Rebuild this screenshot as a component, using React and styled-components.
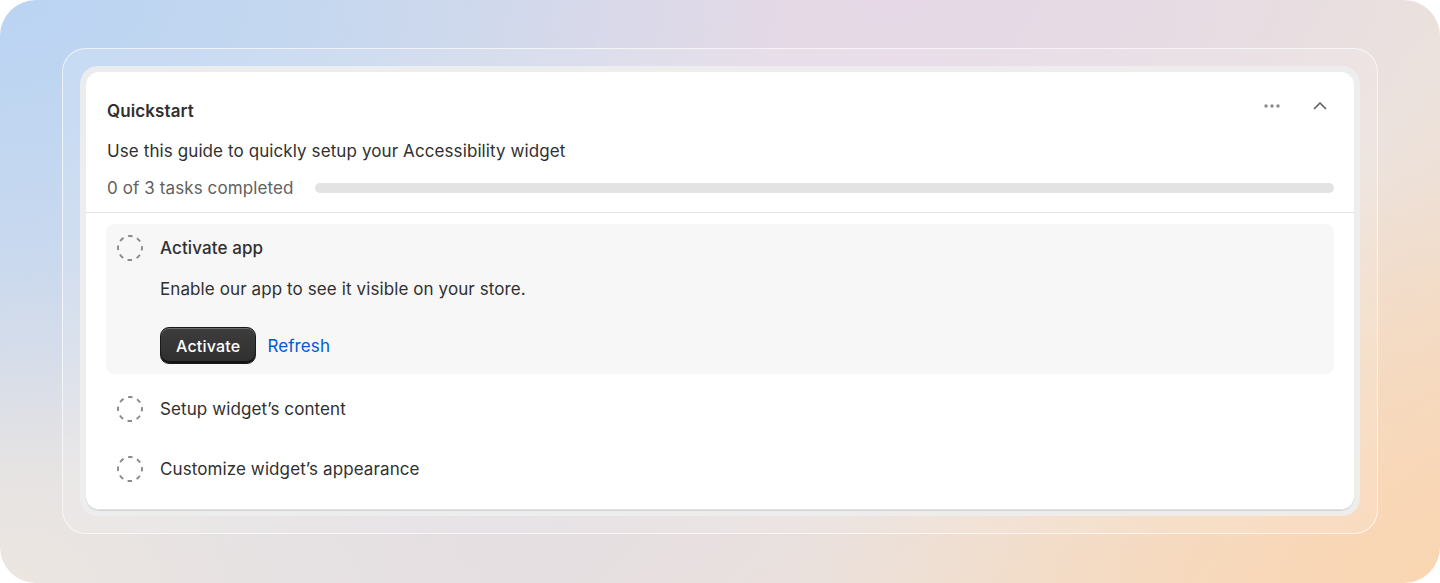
import styled, { createGlobalStyle } from "styled-components";

const GlobalStyle = createGlobalStyle`
  html, body {
    margin: 0;
    padding: 0;
    background: #ffffff;
  }
  body {
    font-family: Inter, "Noto Sans", "Liberation Sans", sans-serif;
    color: #303030;
    -webkit-font-smoothing: antialiased;
  }
  * { box-sizing: border-box; }
`;

const tasks = [
  {
    title: "Activate app",
    text: "Enable our app to see it visible on your store.",
    open: true,
  },
  { title: "Setup widget’s content" },
  { title: "Customize widget’s appearance" },
];

function DashedCircle() {
  return (
    <svg width="26" height="26" viewBox="0 0 26 26" fill="none">
      <circle
        cx="13"
        cy="13"
        r="12"
        stroke="#8a8a8a"
        strokeWidth="1.9"
        strokeDasharray="4.6 4.8"
        strokeDashoffset="2.2"
      />
    </svg>
  );
}

function Dots() {
  return (
    <svg width="20" height="20" viewBox="0 0 20 20" fill="#8a8a8a">
      <circle cx="4" cy="10" r="1.7" />
      <circle cx="10" cy="10" r="1.7" />
      <circle cx="16" cy="10" r="1.7" />
    </svg>
  );
}

function ChevronUp() {
  return (
    <svg width="20" height="20" viewBox="0 0 20 20" fill="none">
      <path
        d="M4.5 12.5L10 7l5.5 5.5"
        stroke="#616161"
        strokeWidth="1.7"
        strokeLinecap="round"
        strokeLinejoin="round"
      />
    </svg>
  );
}

function App() {
  return (
    <>
      <GlobalStyle />
      <Backdrop>
        <Frame>
          <Tray>
            <Card>
              <Top>
                <Header>
                  <Title>Quickstart</Title>
                  <Actions>
                    <IconButton aria-label="More">
                      <Dots />
                    </IconButton>
                    <IconButton aria-label="Collapse">
                      <ChevronUp />
                    </IconButton>
                  </Actions>
                </Header>
                <Lead>Use this guide to quickly setup your Accessibility widget</Lead>
                <ProgressRow>
                  <Muted>0 of 3 tasks completed</Muted>
                  <Track>
                    <Fill style={{ width: `${(0 / 3) * 100}%` }} />
                  </Track>
                </ProgressRow>
              </Top>
              <TaskList>
                {tasks.map((t) => (
                  <Task key={t.title} $open={t.open}>
                    <DashedCircle />
                    <TaskBody>
                      <TaskTitle $open={t.open}>{t.title}</TaskTitle>
                      {t.open && (
                        <>
                          <TaskText>{t.text}</TaskText>
                          <Buttons>
                            <Primary>Activate</Primary>
                            <LinkButton>Refresh</LinkButton>
                          </Buttons>
                        </>
                      )}
                    </TaskBody>
                  </Task>
                ))}
              </TaskList>
            </Card>
          </Tray>
        </Frame>
      </Backdrop>
    </>
  );
}

export default App;

const Backdrop = styled.div`
  width: 1440px;
  height: 583px;
  border-radius: 36px;
  padding: 48px 62px 49px;
  background:
    radial-gradient(ellipse 55% 80% at 0% 0%, rgba(186, 212, 242, 1) 0%, rgba(186, 212, 242, 0) 100%),
    radial-gradient(ellipse 45% 70% at 100% 100%, rgba(250, 214, 178, 1) 0%, rgba(250, 214, 178, 0) 100%),
    radial-gradient(ellipse 40% 60% at 62% 0%, rgba(230, 216, 230, 1) 0%, rgba(230, 216, 230, 0) 100%),
    radial-gradient(ellipse 40% 60% at 0% 100%, rgba(236, 230, 224, 1) 0%, rgba(236, 230, 224, 0) 100%),
    linear-gradient(135deg, #cfdcef 0%, #e2dde4 45%, #ece2dc 75%, #f5d9c0 100%);
  overflow: hidden;
`;

const Frame = styled.div`
  height: 100%;
  border-radius: 24px;
  border: 1px solid rgba(255, 255, 255, 0.65);
  background: rgba(255, 255, 255, 0.14);
  padding: 17px 17px;
`;

const Tray = styled.div`
  height: 100%;
  border-radius: 18px;
  background: rgba(238, 238, 238, 0.92);
  padding: 6px;
`;

const Card = styled.div`
  height: 100%;
  background: #ffffff;
  border-radius: 13px;
  box-shadow: 0 1px 0 0 #d2d2d2, inset 0 -1px 0 0 #e2e2e2;
  display: flex;
  flex-direction: column;
`;

const Top = styled.div`
  padding: 20px 20px 12px;
  border-bottom: 1px solid #e3e3e3;
`;

const Header = styled.div`
  display: flex;
  align-items: flex-start;
  justify-content: space-between;
`;

const Title = styled.h2`
  margin: 7px 0 0 1px;
  font-size: 17px;
  line-height: 24px;
  letter-spacing: 0.1px;
  font-weight: 600;
  color: #303030;
`;

const Actions = styled.div`
  display: flex;
  gap: 20px;
`;

const IconButton = styled.button`
  width: 28px;
  height: 28px;
  border: none;
  background: transparent;
  padding: 0;
  display: flex;
  align-items: center;
  justify-content: center;
  border-radius: 8px;
  cursor: pointer;
`;

const Lead = styled.p`
  margin: 16px 0 0 1px;
  font-size: 17px;
  line-height: 24px;
  letter-spacing: 0.1px;
  color: #303030;
`;

const ProgressRow = styled.div`
  margin-top: 13px;
  display: flex;
  align-items: center;
  gap: 22px;
`;

const Muted = styled.span`
  font-size: 17px;
  line-height: 24px;
  letter-spacing: 0.1px;
  color: #616161;
  white-space: nowrap;
  margin-left: 1px;
`;

const Track = styled.div`
  flex: 1;
  height: 10px;
  border-radius: 5px;
  background: #e3e3e3;
  overflow: hidden;
`;

const Fill = styled.div`
  height: 100%;
  background: #303030;
`;

const TaskList = styled.div`
  padding: 11px 20px 19px;
  display: flex;
  flex-direction: column;
  gap: 11px;
`;

const Task = styled.div`
  display: flex;
  align-items: flex-start;
  gap: 17px;
  padding: ${(p) => (p.$open ? "12px 12px 10px 11px" : "12px 12px 12px 11px")};
  border-radius: 8px;
  background: ${(p) => (p.$open ? "#f7f7f7" : "transparent")};

  & > svg {
    margin-top: -1px;
    flex-shrink: 0;
  }
`;

const TaskBody = styled.div`
  display: flex;
  flex-direction: column;
`;

const TaskTitle = styled.div`
  font-size: 17px;
  line-height: 24px;
  letter-spacing: 0.1px;
  font-weight: ${(p) => (p.$open ? 500 : 400)};
  color: #303030;
`;

const TaskText = styled.p`
  margin: 17px 0 0;
  font-size: 17px;
  line-height: 24px;
  letter-spacing: 0.1px;
  color: #303030;
`;

const Buttons = styled.div`
  margin-top: 26px;
  display: flex;
  align-items: center;
  gap: 11px;
`;

const Primary = styled.button`
  height: 37px;
  padding: 0 15px;
  border-radius: 9px;
  border: 1px solid #1a1a1a;
  background: linear-gradient(180deg, #3d3d3d 0%, #2f2f2f 100%);
  box-shadow: inset 0 1px 0 rgba(255, 255, 255, 0.25), inset 0 -2px 0 rgba(0, 0, 0, 0.6);
  color: #ffffff;
  font-family: inherit;
  font-size: 16px;
  font-weight: 500;
  letter-spacing: 0.2px;
  cursor: pointer;
`;

const LinkButton = styled.button`
  border: none;
  background: none;
  padding: 0;
  color: #005bd3;
  font-family: inherit;
  font-size: 17px;
  letter-spacing: 0.1px;
  font-weight: 400;
  cursor: pointer;
`;
